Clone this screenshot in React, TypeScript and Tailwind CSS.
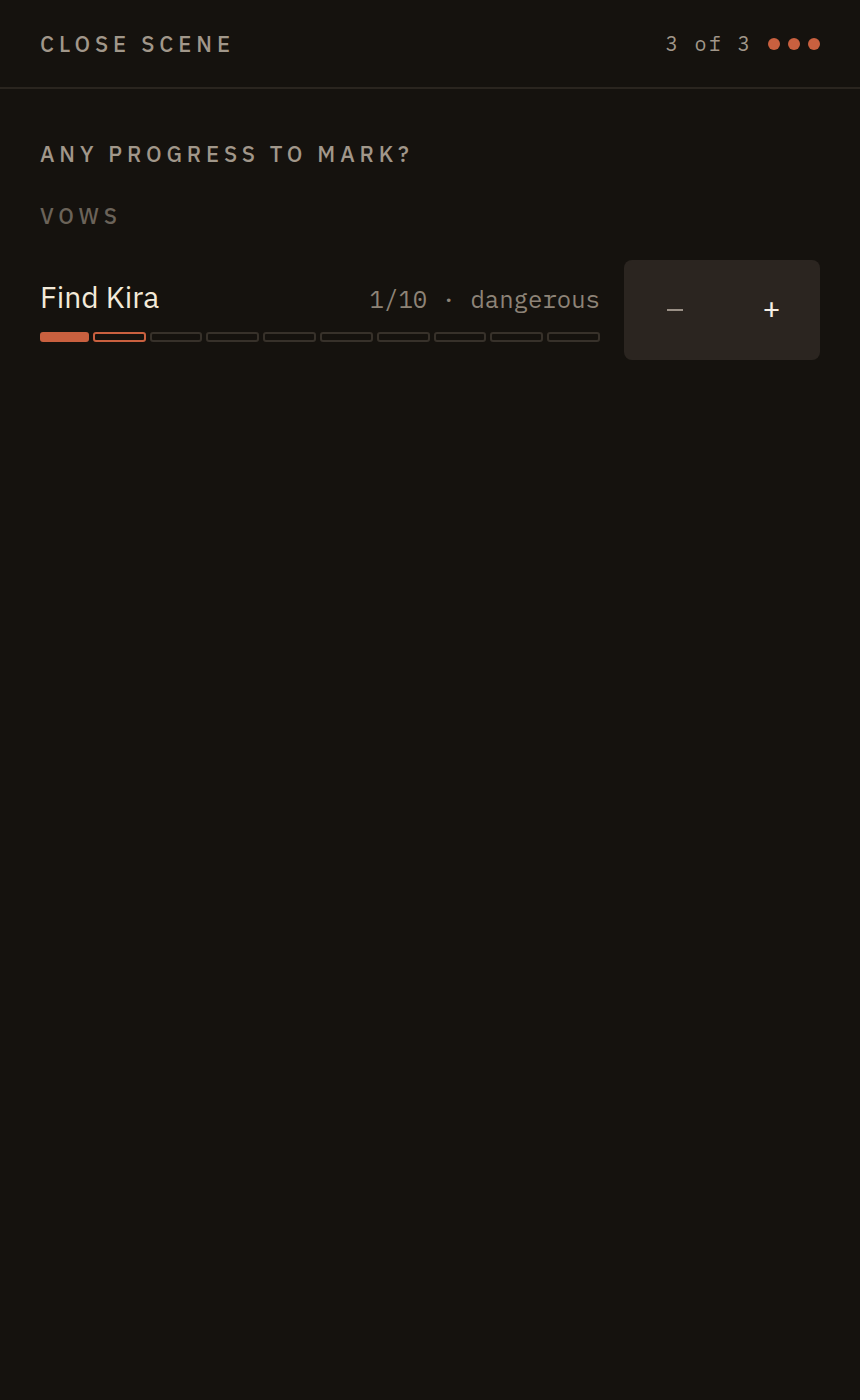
import React from 'react'

const sans = "font-['IBM_Plex_Sans','Inter','Noto_Sans',sans-serif]"
const mono = "font-['IBM_Plex_Mono','Liberation_Mono',monospace]"

function ProgressTrack({ filled, marked, total }: { filled: number; marked: number; total: number }) {
  return (
    <div className="flex gap-1 mt-5">
      {Array.from({ length: total }).map((_, i) => (
        <div
          key={i}
          className={
            i < filled
              ? 'flex-1 h-[10px] rounded-[3px] bg-[#c9603f]'
              : i < filled + marked
                ? 'flex-1 h-[10px] rounded-[3px] border-2 border-[#c9603f]'
                : 'flex-1 h-[10px] rounded-[3px] border-2 border-[#37312a]'
          }
        />
      ))}
    </div>
  )
}

export default function App() {
  return (
    <div className={`min-h-[1400px] bg-[#15120e] ${sans}`}>
      {/* header */}
      <div className="h-[89px] px-10 flex items-center justify-between border-b-2 border-[#2a251f]">
        <div className="text-[22px] font-medium tracking-[0.225em] text-[#a1978a]">CLOSE SCENE</div>
        <div className="flex items-center gap-4">
          <span className={`${mono} text-[20px] tracking-[2.4px] text-[#a1978a]`}>3 of 3</span>
          <div className="flex gap-2">
            <span className="w-3 h-3 rounded-full bg-[#c9603f]" />
            <span className="w-3 h-3 rounded-full bg-[#c9603f]" />
            <span className="w-3 h-3 rounded-full bg-[#c9603f]" />
          </div>
        </div>
      </div>

      <div className="px-10 pt-12">
        <div className="text-[22px] leading-[33px] font-medium tracking-[0.22em] text-[#a1978a]">ANY PROGRESS TO MARK?</div>
        <div className="mt-[29px] text-[22px] leading-[33px] font-medium tracking-[0.22em] text-[#6b6359]">VOWS</div>

        <div className="mt-7 flex items-center gap-6">
          <div className="flex-1 pt-1">
            <div className="flex items-baseline justify-between">
              <span className="text-[30px] text-[#f3ead9] leading-none">Find Kira</span>
              <span className={`${mono} text-[24px] text-[#8d8377] leading-none`}>1/10 · dangerous</span>
            </div>
            <ProgressTrack filled={1} marked={1} total={10} />
          </div>
          <div className="w-[196px] h-[100px] rounded-lg bg-[#2b2520] flex">
            <button className="flex-1 flex items-center justify-center pl-[2px]">
              <span className="w-4 h-[2px] bg-[#9a9086]" />
            </button>
            <button className="flex-1 flex items-center justify-center pb-1 text-[30px] text-[#f6f0e6] leading-none">+</button>
          </div>
        </div>
      </div>
    </div>
  )
}
